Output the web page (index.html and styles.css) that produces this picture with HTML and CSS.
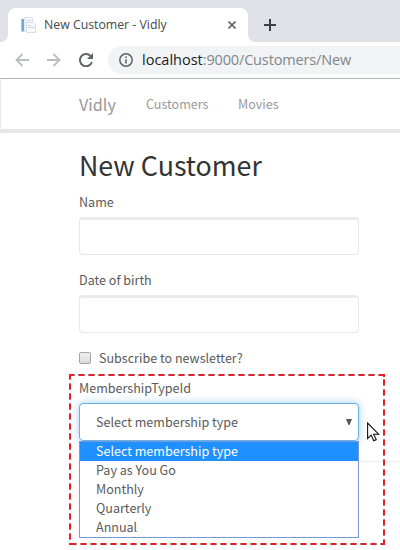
FILE: index.html
```html
<!DOCTYPE html>
<html lang="en">
<head>
<meta charset="utf-8">
<title>New Customer - Vidly</title>
<link rel="stylesheet" href="styles.css">
</head>
<body>
<header class="browser">
  <div class="tabs">
    <svg class="tab-foot" width="8" height="8" viewBox="0 0 8 8"><path d="M8 0q0 8-8 8h8z" fill="#fff"/></svg>
    <div class="tab">
      <svg class="favicon" width="16" height="16" viewBox="0 0 16 16">
        <path d="M4 .5h8.500v14H4z" fill="#f2f6fa" stroke="#dce3ea"/>
        <path d="M6 3.500h5M6 5.500h2" stroke="#d5dee6"/>
        <path d="M6.500 5.500h6.500l2.500 2.500v7.500h-9z" fill="#f8f8f9" stroke="#dadde1"/>
        <path d="M8 10.500h6M8 8.500h3" stroke="#cfd3d8"/>
        <path d="M1 2h3v12.500H1z" fill="#6caad2"/>
        <path d="M1.500 2v12" stroke="#a0c8e0"/>
        <path d="M4.500 1v14" stroke="#dce9f2"/>
      </svg>
      <span class="tab-title">New Customer - Vidly</span>
      <svg class="close" width="8" height="8" viewBox="0 0 8 8"><path d="M.5.5l7 7m0-7l-7 7" stroke="#5f6368" stroke-width="1.600"/></svg>
    </div>
    <svg class="tab-foot" width="8" height="8" viewBox="0 0 8 8"><path d="M0 0q0 8 8 8H0z" fill="#fff"/></svg>
    <svg class="plus" width="12" height="12" viewBox="0 0 12 12"><path d="M6 0v12M0 6h12" stroke="#3c4043" stroke-width="2"/></svg>
  </div>
  <div class="toolbar">
    <svg width="14" height="14" viewBox="0 0 14 14"><path d="M14 7H1.500M7.500 1L1.500 7l6 6" fill="none" stroke="#babcbe" stroke-width="1.800"/></svg>
    <svg width="14" height="14" viewBox="0 0 14 14"><path d="M0 7h12.500M6.500 1l6 6-6 6" fill="none" stroke="#babcbe" stroke-width="1.800"/></svg>
    <svg width="14" height="14" viewBox="0 0 14 14"><path d="M12.900 9A6.100 6.100 0 1 1 11.500 2.900" fill="none" stroke="#5f6368" stroke-width="2"/><path d="M14 0v6H8z" fill="#5f6368"/></svg>
    <div class="omnibox">
      <svg width="14" height="14" viewBox="0 0 14 14"><circle cx="7" cy="7" r="6.200" fill="none" stroke="#5f6368" stroke-width="1.500"/><path d="M7 6.200v4.300M7 3.500v1.600" stroke="#5f6368" stroke-width="1.600"/></svg>
      <span class="url"><b>localhost</b>:9000/Customers/New</span>
    </div>
  </div>
</header>
<nav class="navbar">
  <a class="brand">Vidly</a>
  <a class="customers">Customers</a>
  <a class="movies">Movies</a>
</nav>
<main>
  <h2>New Customer</h2>
  <div class="group"><label for="name">Name</label><input class="control" id="name" type="text"></div>
  <div class="group"><label for="birth">Date of birth</label><input class="control" id="birth" type="text"></div>
  <div class="check"><span class="box"></span><span>Subscribe to newsletter?</span></div>
  <div class="group membership">
    <label>MembershipTypeId</label>
    <div class="control select"><span>Select membership type</span><svg width="6" height="6" viewBox="0 0 6 6"><path d="M0 0h6L3.500 6h-1z" fill="#555"/></svg></div>
    <ul class="menu">
      <li class="active">Select membership type</li>
      <li>Pay as You Go</li>
      <li>Monthly</li>
      <li>Quarterly</li>
      <li>Annual</li>
    </ul>
  </div>
  <hr>
</main>
<svg class="outline" width="316" height="171" viewBox="0 0 316 171" fill="none" stroke-width="2">
  <g stroke="#bd8083" stroke-dasharray="7 3">
    <path d="M-1 1H316"/><path d="M1 170H316"/><path d="M1-1V171"/><path d="M315 5V171"/>
  </g>
  <g stroke="#ed1c24" stroke-dasharray="5 5">
    <path d="M0 1H316"/><path d="M2 170H316"/><path d="M1 0V171"/><path d="M315 6V171"/>
  </g>
  <path d="M0 1h5M1 0v5M315 0v3M0 170h2M314 170h2" stroke="#ed1c24"/>
</svg>
<svg class="cursor" width="13" height="20" viewBox="0 0 13 20"><path d="M.6 1v15.500l3.600-3.400 2.500 5.600 2.500-1.100-2.500-5.400h4.900z" fill="#fff" stroke="#111" stroke-width="1.100"/></svg>
</body>
</html>
```
FILE: styles.css
```css
* { box-sizing: border-box; }
body {
  margin: 0;
  width: 400px;
  height: 550px;
  overflow: hidden;
  position: relative;
  background: #fff;
  color: #5a5a5a;
  font: 12.55px/20px "Noto Sans CJK SC", sans-serif;
}
svg { display: block; flex: none; }
.browser { height: 79px; border-bottom: 1px solid #b3b4b5; font-family: "Open Sans", sans-serif; }
.tabs { display: flex; align-items: flex-end; height: 42px; background: #dee1e6; }
.tab {
  display: flex;
  align-items: center;
  width: 240px;
  height: 34px;
  padding: 0 12px;
  border-radius: 8px 8px 0 0;
  background: #fff;
}
.tab-title { margin-left: 8px; flex: 1; color: #45494d; font-size: 12.3px; white-space: nowrap; }
.plus { margin: 0 0 11px 8px; }
.toolbar { display: flex; align-items: center; gap: 18px; height: 36px; padding-left: 15px; }
.omnibox {
  display: flex;
  align-items: center;
  flex: 1;
  gap: 9px;
  height: 28px;
  margin-left: -3px;
  padding-left: 11px;
  border-radius: 14px 0 0 14px;
  background: #f1f3f4;
}
.url { color: #80868b; font-size: 14.5px; letter-spacing: -.15px; white-space: nowrap; }
.url b { color: #202124; font-weight: 400; letter-spacing: 0; }
.navbar {
  display: flex;
  align-items: center;
  height: 54px;
  padding-left: 78px;
  border-left: 1px solid #e7e7e7;
  border-bottom: 4px solid #e7e7e7;
  color: #999;
}
.brand { font-size: 16.2px; width: 67px; }
.customers { width: 92px; }
main { padding-left: 79px; }
h2 { margin: 15px 0 11px; color: #333; font-size: 26.8px; font-weight: 400; line-height: 33px; }
label { display: block; height: 25px; }
.group { width: 280px; height: 78px; }
.control {
  display: block;
  width: 280px;
  height: 38px;
  border: 1px solid #e7e7e7;
  border-top: 3px solid #ebebeb;
  border-radius: 4px;
  background: #fff;
  outline: none;
}
.check { display: flex; align-items: center; gap: 8px; height: 20px; }
.box {
  width: 12px;
  height: 12px;
  border: 1px solid #a5a5a5;
  border-radius: 2px;
  background: linear-gradient(#eee, #ddd);
}
.membership { position: relative; margin-top: 10px; height: 83px; }
.select {
  display: flex;
  align-items: center;
  justify-content: space-between;
  padding: 0 6px 0 16px;
  border: 1px solid #66afe9;
  box-shadow: 0 0 8px rgba(102, 175, 233, .6);
}
.menu {
  position: absolute;
  top: 63px;
  left: 0;
  width: 280px;
  height: 97px;
  margin: 0;
  padding: 0;
  border: 1px solid #7a9ad7;
  background: #fff;
  list-style: none;
  line-height: 17px;
}
.menu li { height: 19px; padding-left: 16px; }
.menu .active { height: 19px; background: #1e90ff; color: #fff; }
hr { margin: 0; border: 0; border-top: 1px solid #eee; }
.outline { position: absolute; left: 69px; top: 374px; }
.cursor { position: absolute; left: 367px; top: 422px; }
```
